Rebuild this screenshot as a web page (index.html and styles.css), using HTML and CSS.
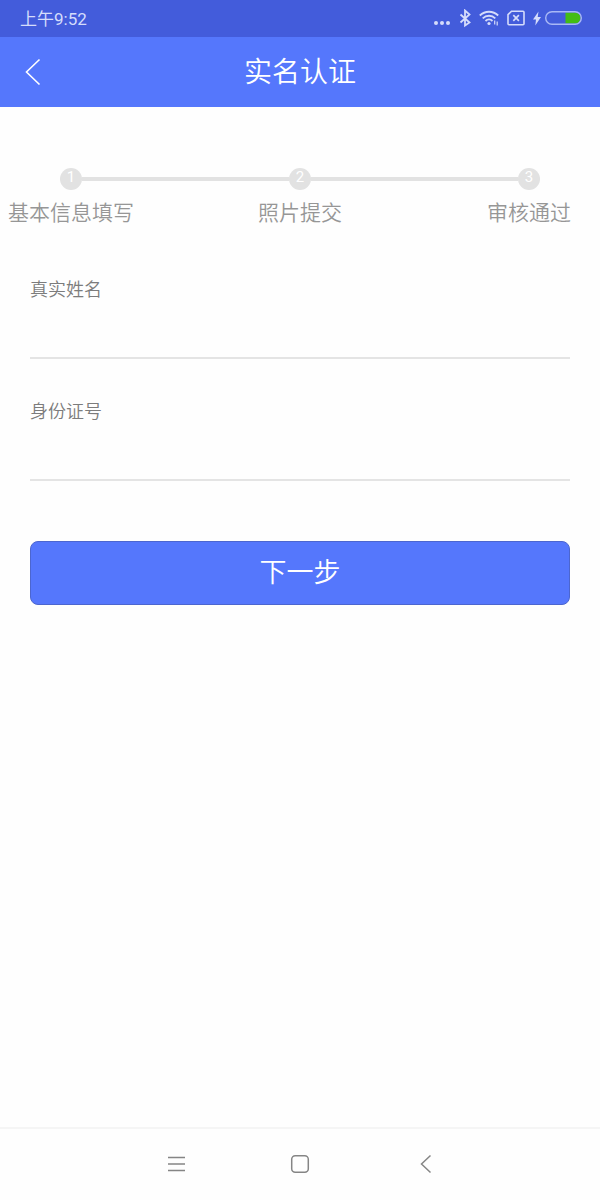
FILE: index.html
```html
<!DOCTYPE html>
<html lang="zh-CN">
<head>
    <meta charset="UTF-8">
    <meta name="viewport" content="width=device-width, initial-scale=1.0">
    <title>实名认证</title>
    <link rel="stylesheet" href="styles.css">
</head>
<body>
    <div class="status">
        <span class="status__time">上午9:52</span>
        <div class="status__icons">
            <svg width="18" height="20" viewBox="0 0 18 20" fill="currentColor">
                <circle cx="3" cy="14" r="2"/>
                <circle cx="9" cy="14" r="2"/>
                <circle cx="15" cy="14" r="2"/>
            </svg>
            <svg width="12" height="20" viewBox="0 0 12 20" fill="none" stroke="currentColor" stroke-width="1.8">
                <path d="M1.500 5.500l9 8L6 16.500V1.500L10.500 5.500l-9 8"/>
            </svg>
            <svg width="20" height="20" viewBox="0 0 20 20" fill="none" stroke="currentColor" stroke-width="1.8">
                <path d="M.8 6.500c5.200-5 13.200-5 18.400 0M3.700 9.300c3.600-3.400 9-3.400 12.600 0M6.500 12c2-2 5-2 7 0"/>
                <circle cx="10" cy="14.500" r="1.600" fill="currentColor" stroke="none"/>
                <path d="M15.700 11.500v4M18.200 12.500v4" stroke-width="1.200"/>
            </svg>
            <svg width="18" height="20" viewBox="0 0 18 20" fill="none" stroke="currentColor" stroke-width="1.6">
                <path d="M4.500 2.200H16a1 1 0 0 1 1 1v11.600a1 1 0 0 1-1 1H2a1 1 0 0 1-1-1V5.700z"/>
                <path d="M6.300 6.200l5.600 5.600M11.900 6.200l-5.600 5.600" stroke-width="1.700"/>
            </svg>
            <div class="status__power">
                <svg width="8" height="20" viewBox="0 0 8 20" fill="currentColor">
                    <path d="M5.500 2.500L0 10.500h3L2.300 16.500 8 8H4.700z"/>
                </svg>
                <svg width="37" height="20" viewBox="0 0 37 20">
                    <path d="M20.500 3.500H30a5.500 5.500 0 0 1 0 11h-9.500z" fill="#43bd14"/>
                    <rect x=".7" y="2.700" width="35.600" height="12.600" rx="6.300" fill="none" stroke="#a9b8f6" stroke-width="1.400"/>
                </svg>
            </div>
        </div>
    </div>

    <header class="header">
        <button class="header__back" type="button" aria-label="返回">
            <svg width="16" height="28" viewBox="0 0 16 28" fill="none" stroke="currentColor" stroke-width="1.6">
                <path d="M14.500 1.500L1.500 14l13 12.500"/>
            </svg>
        </button>
        <h1 class="header__title">实名认证</h1>
    </header>

    <main class="main">
        <div class="steps">
            <div class="step">
                <span class="step__number">1</span>
                <span class="step__name">基本信息填写</span>
            </div>
            <div class="steps__line"></div>
            <div class="step">
                <span class="step__number">2</span>
                <span class="step__name">照片提交</span>
            </div>
            <div class="steps__line"></div>
            <div class="step">
                <span class="step__number">3</span>
                <span class="step__name">审核通过</span>
            </div>
        </div>

        <form class="form">
            <div class="field">
                <label class="field__label" for="name">真实姓名</label>
                <input class="field__input" type="text" id="name">
            </div>
            <div class="field">
                <label class="field__label" for="idcard">身份证号</label>
                <input class="field__input" type="text" id="idcard">
            </div>
            <button class="form__next" type="button">下一步</button>
        </form>
    </main>

    <nav class="navbar">
        <button class="navbar__key" type="button" aria-label="菜单">
            <svg width="20" height="20" viewBox="0 0 20 20" fill="none" stroke="currentColor" stroke-width="1.5">
                <path d="M2 3.500h17M2 10h17M2 16.500h17"/>
            </svg>
        </button>
        <button class="navbar__key" type="button" aria-label="主页">
            <svg width="20" height="20" viewBox="0 0 20 20" fill="none" stroke="currentColor" stroke-width="1.5">
                <rect x="1.700" y="1.700" width="16.600" height="16.600" rx="3.500"/>
            </svg>
        </button>
        <button class="navbar__key" type="button" aria-label="返回">
            <svg width="20" height="20" viewBox="0 0 20 20" fill="none" stroke="currentColor" stroke-width="1.5">
                <path d="M16.500 1.500L7.500 10l9 8.500"/>
            </svg>
        </button>
    </nav>
</body>
</html>
```
FILE: styles.css
```css
* {
    box-sizing: border-box;
}

body {
    display: flex;
    flex-direction: column;
    min-height: 100vh;
    margin: 0;
    background-color: #fefefe;
    font-family: 'Noto Sans CJK SC', sans-serif;
    font-weight: 350;
}

button {
    padding: 0;
    border: none;
    background: none;
    font-family: inherit;
    font-weight: inherit;
    cursor: pointer;
}

svg {
    display: block;
}

.status {
    display: flex;
    justify-content: space-between;
    align-items: center;
    height: 37px;
    padding: 0 18px 0 20px;
    background-color: #435cdb;
    color: #d5dcfb;
}

.status__time {
    font-family: Roboto, 'Noto Sans CJK SC', sans-serif;
    font-size: 17px;
    font-weight: 400;
    line-height: 24px;
}

.status__icons {
    display: flex;
    align-items: center;
    gap: 8px;
}

.status__power {
    display: flex;
    gap: 4px;
}

.header {
    display: grid;
    grid-template-columns: 48px 1fr 48px;
    align-items: center;
    height: 70px;
    background-color: #5577fc;
    color: #fff;
}

.header__back {
    padding-left: 25px;
    color: inherit;
}

.header__title {
    margin: 0;
    padding-bottom: 5px;
    font-size: 28px;
    font-weight: inherit;
    line-height: 40px;
    text-align: center;
}

.main {
    flex: 1;
    padding: 61px 30px;
}

.steps {
    display: flex;
    padding: 0 30px;
}

.steps__line {
    flex: 1;
    height: 4px;
    margin-top: 9px;
    background-color: #e2e2e2;
}

.step {
    display: flex;
    flex-direction: column;
    align-items: center;
    width: 22px;
}

.step__number {
    width: 22px;
    height: 22px;
    border-radius: 50%;
    background-color: #e2e2e2;
    color: #fff;
    font-family: Roboto, sans-serif;
    font-size: 15px;
    font-weight: 400;
    line-height: 18px;
    text-align: center;
}

.step__name {
    margin-top: 6px;
    color: #969696;
    font-size: 21px;
    line-height: 30px;
    white-space: nowrap;
}

.form {
    margin-top: 49px;
}

.field {
    display: flex;
    flex-direction: column;
    margin-bottom: 38px;
}

.field__label {
    color: #7c7c7c;
    font-size: 18px;
    line-height: 26px;
}

.field__input {
    width: 100%;
    height: 58px;
    padding: 0;
    border: none;
    border-bottom: 2px solid #e4e4e4;
    border-radius: 0;
    outline: none;
    background: none;
    color: #333;
    font-family: inherit;
    font-size: 20px;
}

.form__next {
    width: 100%;
    height: 64px;
    margin-top: 22px;
    padding-bottom: 6px;
    border: 1px solid #4c66cf;
    border-radius: 8px;
    background-color: #5577fc;
    color: #fff;
    font-size: 27px;
}

.navbar {
    display: grid;
    grid-template-columns: repeat(3, 1fr);
    height: 73px;
    padding: 0 19% 2px;
    border-top: 2px solid #f5f5f5;
    color: #858585;
}

.navbar__key {
    display: flex;
    justify-content: center;
    align-items: center;
    color: inherit;
}
```
